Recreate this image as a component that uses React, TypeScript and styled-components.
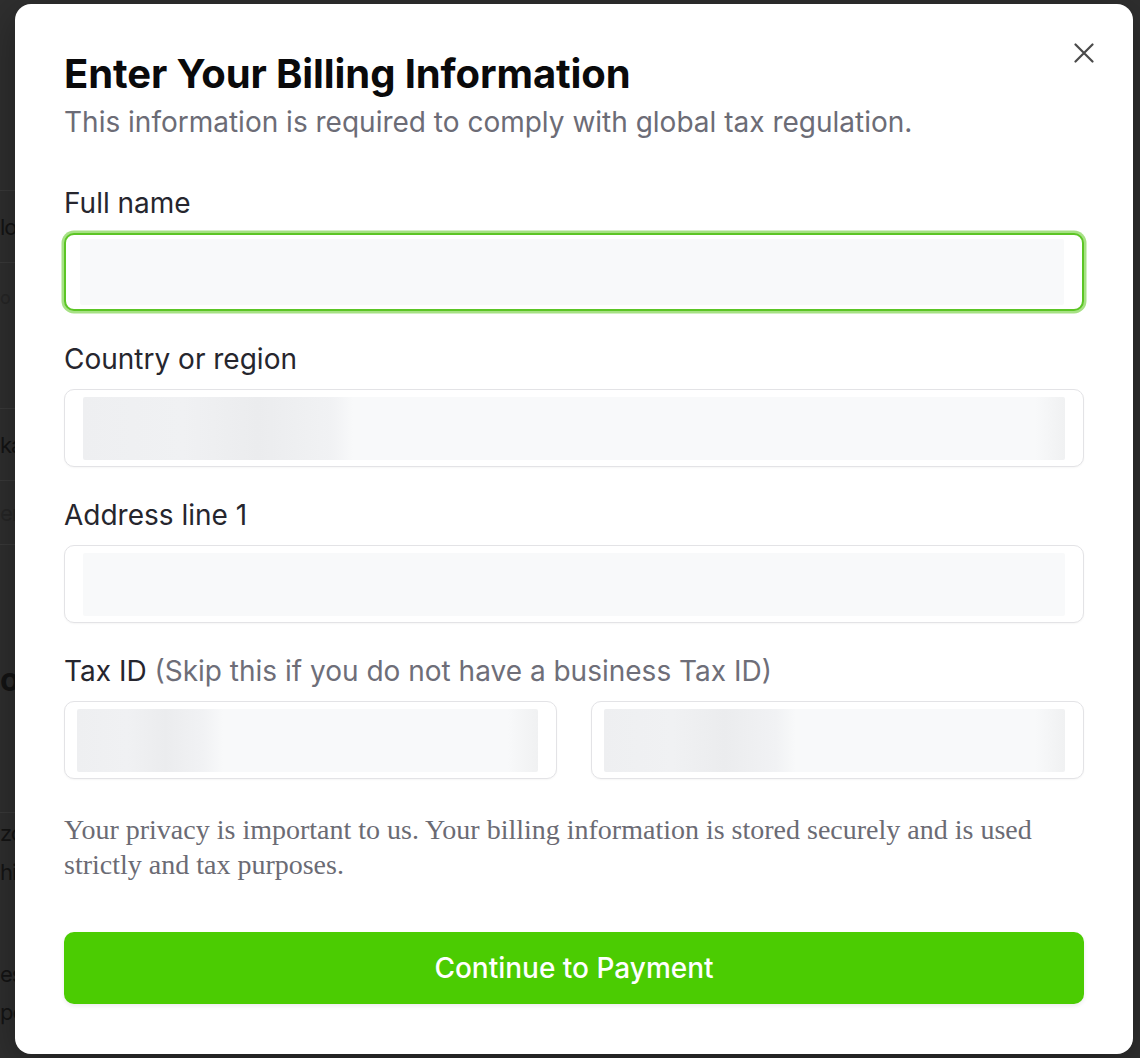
import React from "react";
import styled, { createGlobalStyle } from "styled-components";

const GlobalStyle = createGlobalStyle`
  html, body {
    margin: 0;
    padding: 0;
    background: #2f2f2f;
  }
  body {
    font-family: "Inter", "Noto Sans", sans-serif;
    -webkit-font-smoothing: antialiased;
  }
  * {
    box-sizing: border-box;
  }
`;

const BackPage = styled.div`
  position: relative;
  width: 1140px;
  height: 1058px;
  overflow: hidden;
  background: #2f2f2f;
`;

// sliver of the page behind the dialog, visible left of the modal
const BackStrip = styled.div`
  width: 15px;
  overflow: hidden;
  display: flex;
  flex-direction: column;
  padding-top: 190px;
`;

const BackRow = styled.div<{ $h: number; $line?: boolean }>`
  height: ${(p) => p.$h}px;
  display: flex;
  align-items: center;
  white-space: nowrap;
  border-top: ${(p) => (p.$line ? "1px solid #3a3a3a" : "none")};
`;

const BackText = styled.span<{ $size?: number; $bold?: boolean; $muted?: boolean }>`
  font-size: ${(p) => p.$size ?? 22}px;
  font-weight: ${(p) => (p.$bold ? 700 : 400)};
  color: ${(p) => (p.$muted ? "#262626" : "#141414")};
  letter-spacing: -1px;
`;

const Overlay = styled.div`
  position: absolute;
  left: 15px;
  top: 4px;
  width: 1118px;
  height: 1050px;
  background: #ffffff;
  border-radius: 16px;
  box-shadow: 0 10px 40px rgba(0, 0, 0, 0.35);
  padding: 46px 49px 50px;
  display: flex;
  flex-direction: column;
`;

const CloseButton = styled.button`
  position: absolute;
  top: 38px;
  right: 38px;
  width: 22px;
  height: 22px;
  padding: 0;
  border: none;
  background: transparent;
  display: flex;
  align-items: center;
  justify-content: center;
  cursor: pointer;
`;

const Title = styled.h1`
  margin: 0;
  font-size: 40px;
  line-height: 48px;
  font-weight: 700;
  color: #0a0a0b;
  letter-spacing: -0.1px;
`;

const Subtitle = styled.p`
  margin: 6px 0 0;
  font-size: 28px;
  line-height: 36px;
  color: #6c6c76;
`;

const Form = styled.div`
  margin-top: 47px;
  display: flex;
  flex-direction: column;
  gap: 32px;
`;

const Field = styled.div`
  display: flex;
  flex-direction: column;
  gap: 14px;
`;

const Label = styled.label`
  font-size: 28px;
  line-height: 32px;
  color: #26262e;
`;

const Hint = styled.span`
  color: #6e6e78;
`;

const InputRow = styled.div`
  display: grid;
  grid-template-columns: 1fr 1fr;
  gap: 34px;
`;

const InputBox = styled.div<{ $focused?: boolean; $inset?: number }>`
  height: 78px;
  border-radius: 10px;
  background: #ffffff;
  border: ${(p) => (p.$focused ? "2px solid #5cc525" : "1.5px solid #e3e3e6")};
  box-shadow: ${(p) =>
    p.$focused
      ? "0 0 0 2.5px #a6e184"
      : "0 1px 2px rgba(0, 0, 0, 0.04)"};
  padding: ${(p) => (p.$focused ? "4px 18px" : "6.5px 18px")};
  padding-left: ${(p) => p.$inset ?? 18}px;
  display: flex;
`;

const Redacted = styled.div<{ $smudge?: number }>`
  flex: 1;
  border-radius: 2px;
  background: ${(p) =>
    p.$smudge
      ? `linear-gradient(90deg, #eeeff1 0px, #f0f1f3 ${p.$smudge * 0.4}px, #ebecee ${p.$smudge * 0.7}px, #f1f2f4 ${p.$smudge}px, #f8f9fa ${p.$smudge + 20}px, #f8f9fa calc(100% - 30px), #f0f1f2 100%)`
      : "#f8f9fa"};
`;

const Privacy = styled.p`
  margin: 33px 0 0;
  font-family: "Liberation Serif", "Times New Roman", serif;
  font-size: 28px;
  line-height: 35px;
  color: #6b6b74;
`;

const SubmitButton = styled.button`
  margin-top: 50px;
  height: 72px;
  width: 100%;
  border: none;
  border-radius: 10px;
  background: #4bcc02;
  color: #ffffff;
  font-family: "Inter", "Noto Sans", sans-serif;
  font-size: 28px;
  font-weight: 500;
  box-shadow: 0 2px 4px rgba(0, 0, 0, 0.08);
  cursor: pointer;
`;

const backRows: { h: number; text: string; size?: number; bold?: boolean; muted?: boolean; line?: boolean }[] = [
  { h: 72, text: "lo", line: true },
  { h: 70, text: "o", size: 18, muted: true, line: true },
  { h: 76, text: "" },
  { h: 72, text: "ka", line: true },
  { h: 64, text: "er", muted: true, line: true },
  { h: 50, text: "", line: true },
  { h: 40, text: "" },
  { h: 90, text: "or", size: 32, bold: true },
  { h: 88, text: "" },
  { h: 40, text: "zo", line: true },
  { h: 40, text: "hi" },
  { h: 62, text: "" },
  { h: 40, text: "es" },
  { h: 36, text: "pe" },
];

const CloseIcon = () => (
  <svg width="20" height="20" viewBox="0 0 20 20" fill="none">
    <path d="M1.5 1.5L18.5 18.5M18.5 1.5L1.5 18.5" stroke="#4a4a4a" strokeWidth="2.2" strokeLinecap="round" />
  </svg>
);

const App = () => (
  <>
    <GlobalStyle />
    <BackPage>
      <BackStrip>
        {backRows.map((r, i) => (
          <BackRow key={i} $h={r.h} $line={r.line}>
            <BackText $size={r.size} $bold={r.bold} $muted={r.muted}>
              {r.text}
            </BackText>
          </BackRow>
        ))}
      </BackStrip>
      <Overlay>
        <CloseButton aria-label="Close">
          <CloseIcon />
        </CloseButton>
        <Title>Enter Your Billing Information</Title>
        <Subtitle>This information is required to comply with global tax regulation.</Subtitle>
        <Form>
          <Field>
            <Label>Full name</Label>
            <InputBox $focused $inset={14}>
              <Redacted />
            </InputBox>
          </Field>
          <Field>
            <Label>Country or region</Label>
            <InputBox>
              <Redacted $smudge={250} />
            </InputBox>
          </Field>
          <Field>
            <Label>Address line 1</Label>
            <InputBox>
              <Redacted />
            </InputBox>
          </Field>
          <Field>
            <Label>
              Tax ID <Hint>(Skip this if you do not have a business Tax ID)</Hint>
            </Label>
            <InputRow>
              <InputBox $inset={12}>
                <Redacted $smudge={126} />
              </InputBox>
              <InputBox $inset={12}>
                <Redacted $smudge={172} />
              </InputBox>
            </InputRow>
          </Field>
        </Form>
        <Privacy>
          Your privacy is important to us. Your billing information is stored securely and is used
          strictly and tax purposes.
        </Privacy>
        <SubmitButton>Continue to Payment</SubmitButton>
      </Overlay>
    </BackPage>
  </>
);

export default App;
